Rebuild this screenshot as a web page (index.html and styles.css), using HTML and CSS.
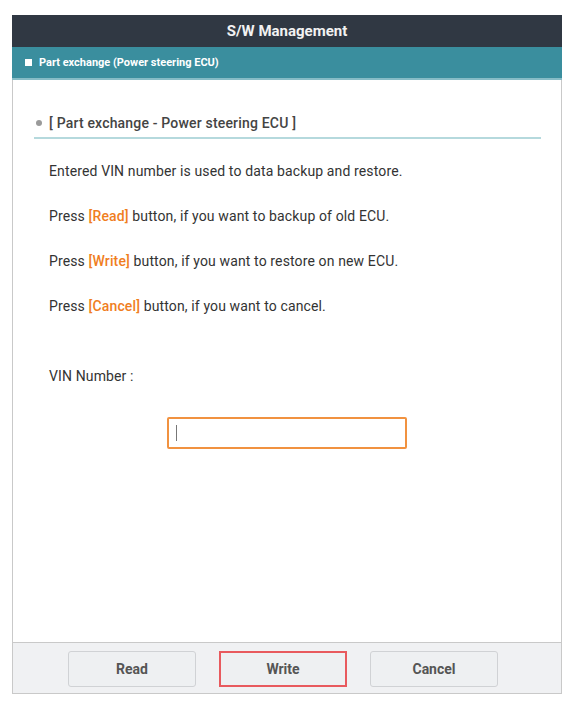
FILE: index.html
```html
<!DOCTYPE html>
<html>
<head>
    <link rel="stylesheet" href="styles.css">
</head>
<body>
    <div class="panel">
        <div class="panel-title">S/W Management</div>
        <div class="panel-sub"><span class="sub-square"></span>Part exchange (Power steering ECU)</div>
        <div class="panel-body">
            <div class="section-head"><span class="dot"></span>[ Part exchange - Power steering ECU ]</div>
            <div class="messages">
                <p>Entered VIN number is used to data backup and restore.</p>
                <p>Press <span class="key">[Read]</span> button, if you want to backup of old ECU.</p>
                <p>Press <span class="key">[Write]</span> button, if you want to restore on new ECU.</p>
                <p>Press <span class="key">[Cancel]</span> button, if you want to cancel.</p>
                <p class="vin-label">VIN Number :</p>
            </div>
            <div class="vin-row">
                <div class="vin-input"><span class="caret"></span></div>
            </div>
        </div>
        <div class="panel-footer">
            <button class="btn">Read</button>
            <button class="btn btn-active">Write</button>
            <button class="btn">Cancel</button>
        </div>
    </div>
</body>
</html>
```

FILE: styles.css
```css
body {
    margin: 0;
    background-color: white;
    font-family: Roboto, "Liberation Sans", Arial, sans-serif;
}
.panel {
    margin: 15px 0 0 12px;
    width: 550px;
    height: 679px;
    box-sizing: border-box;
    border: 1px solid #c9c9c9;
    border-top: none;
    display: flex;
    flex-direction: column;
}
.panel-title {
    height: 32px;
    line-height: 32px;
    margin: 0 -1px;
    background-color: #303843;
    color: #f2f2f2;
    font-size: 15px;
    font-weight: bold;
    text-align: center;
}
.panel-sub {
    height: 31px;
    margin: 0 -1px;
    background-color: #3a8e9e;
    border-bottom: 2px solid #86bcc6;
    color: white;
    font-size: 11px;
    font-weight: bold;
    display: flex;
    align-items: center;
    padding-left: 13px;
}
.sub-square {
    width: 7px;
    height: 7px;
    background-color: white;
    margin-right: 7px;
}
.panel-body {
    flex: 1;
    padding: 33px 20px 0 21px;
}
.section-head {
    display: flex;
    align-items: center;
    height: 20px;
    padding: 0 0 4px 2px;
    border-bottom: 2px solid #b5d9dd;
    color: #444;
    font-size: 14px;
    font-weight: 500;
    letter-spacing: 0.18px;
}
.dot {
    width: 6px;
    height: 6px;
    border-radius: 50%;
    background-color: #9a9a9a;
    margin-right: 7px;
}
.messages {
    padding: 22px 0 0 15px;
    color: #333;
    font-size: 14px;
    letter-spacing: 0.13px;
}
.messages p {
    margin: 0 0 25px 0;
    line-height: 20px;
}
.messages .vin-label {
    margin-top: 50px;
    margin-bottom: 0;
}
.key {
    color: #f07e1e;
    font-weight: 500;
}
.vin-row {
    display: flex;
    justify-content: center;
    margin-top: 31px;
    padding-right: 1px;
}
.vin-input {
    width: 240px;
    height: 32px;
    box-sizing: border-box;
    border: 2px solid #f19240;
    border-radius: 2px;
    display: flex;
    align-items: center;
    padding-left: 7px;
}
.caret {
    width: 1px;
    height: 16px;
    background-color: #777;
}
.panel-footer {
    height: 51px;
    border-top: 1px solid #c9c9c9;
    background-color: #f0f1f3;
    display: flex;
    justify-content: center;
    gap: 23px;
    padding: 8px 8px 0 0;
    box-sizing: border-box;
}
.btn {
    width: 128px;
    height: 36px;
    border: 1px solid #d0d2d5;
    border-radius: 3px;
    background-color: #eef0f2;
    color: #555;
    font-family: Roboto, "Liberation Sans", Arial, sans-serif;
    font-size: 14px;
    font-weight: bold;
}
.btn-active {
    border: 2px solid #e85a5e;
    border-radius: 0;
}
```
